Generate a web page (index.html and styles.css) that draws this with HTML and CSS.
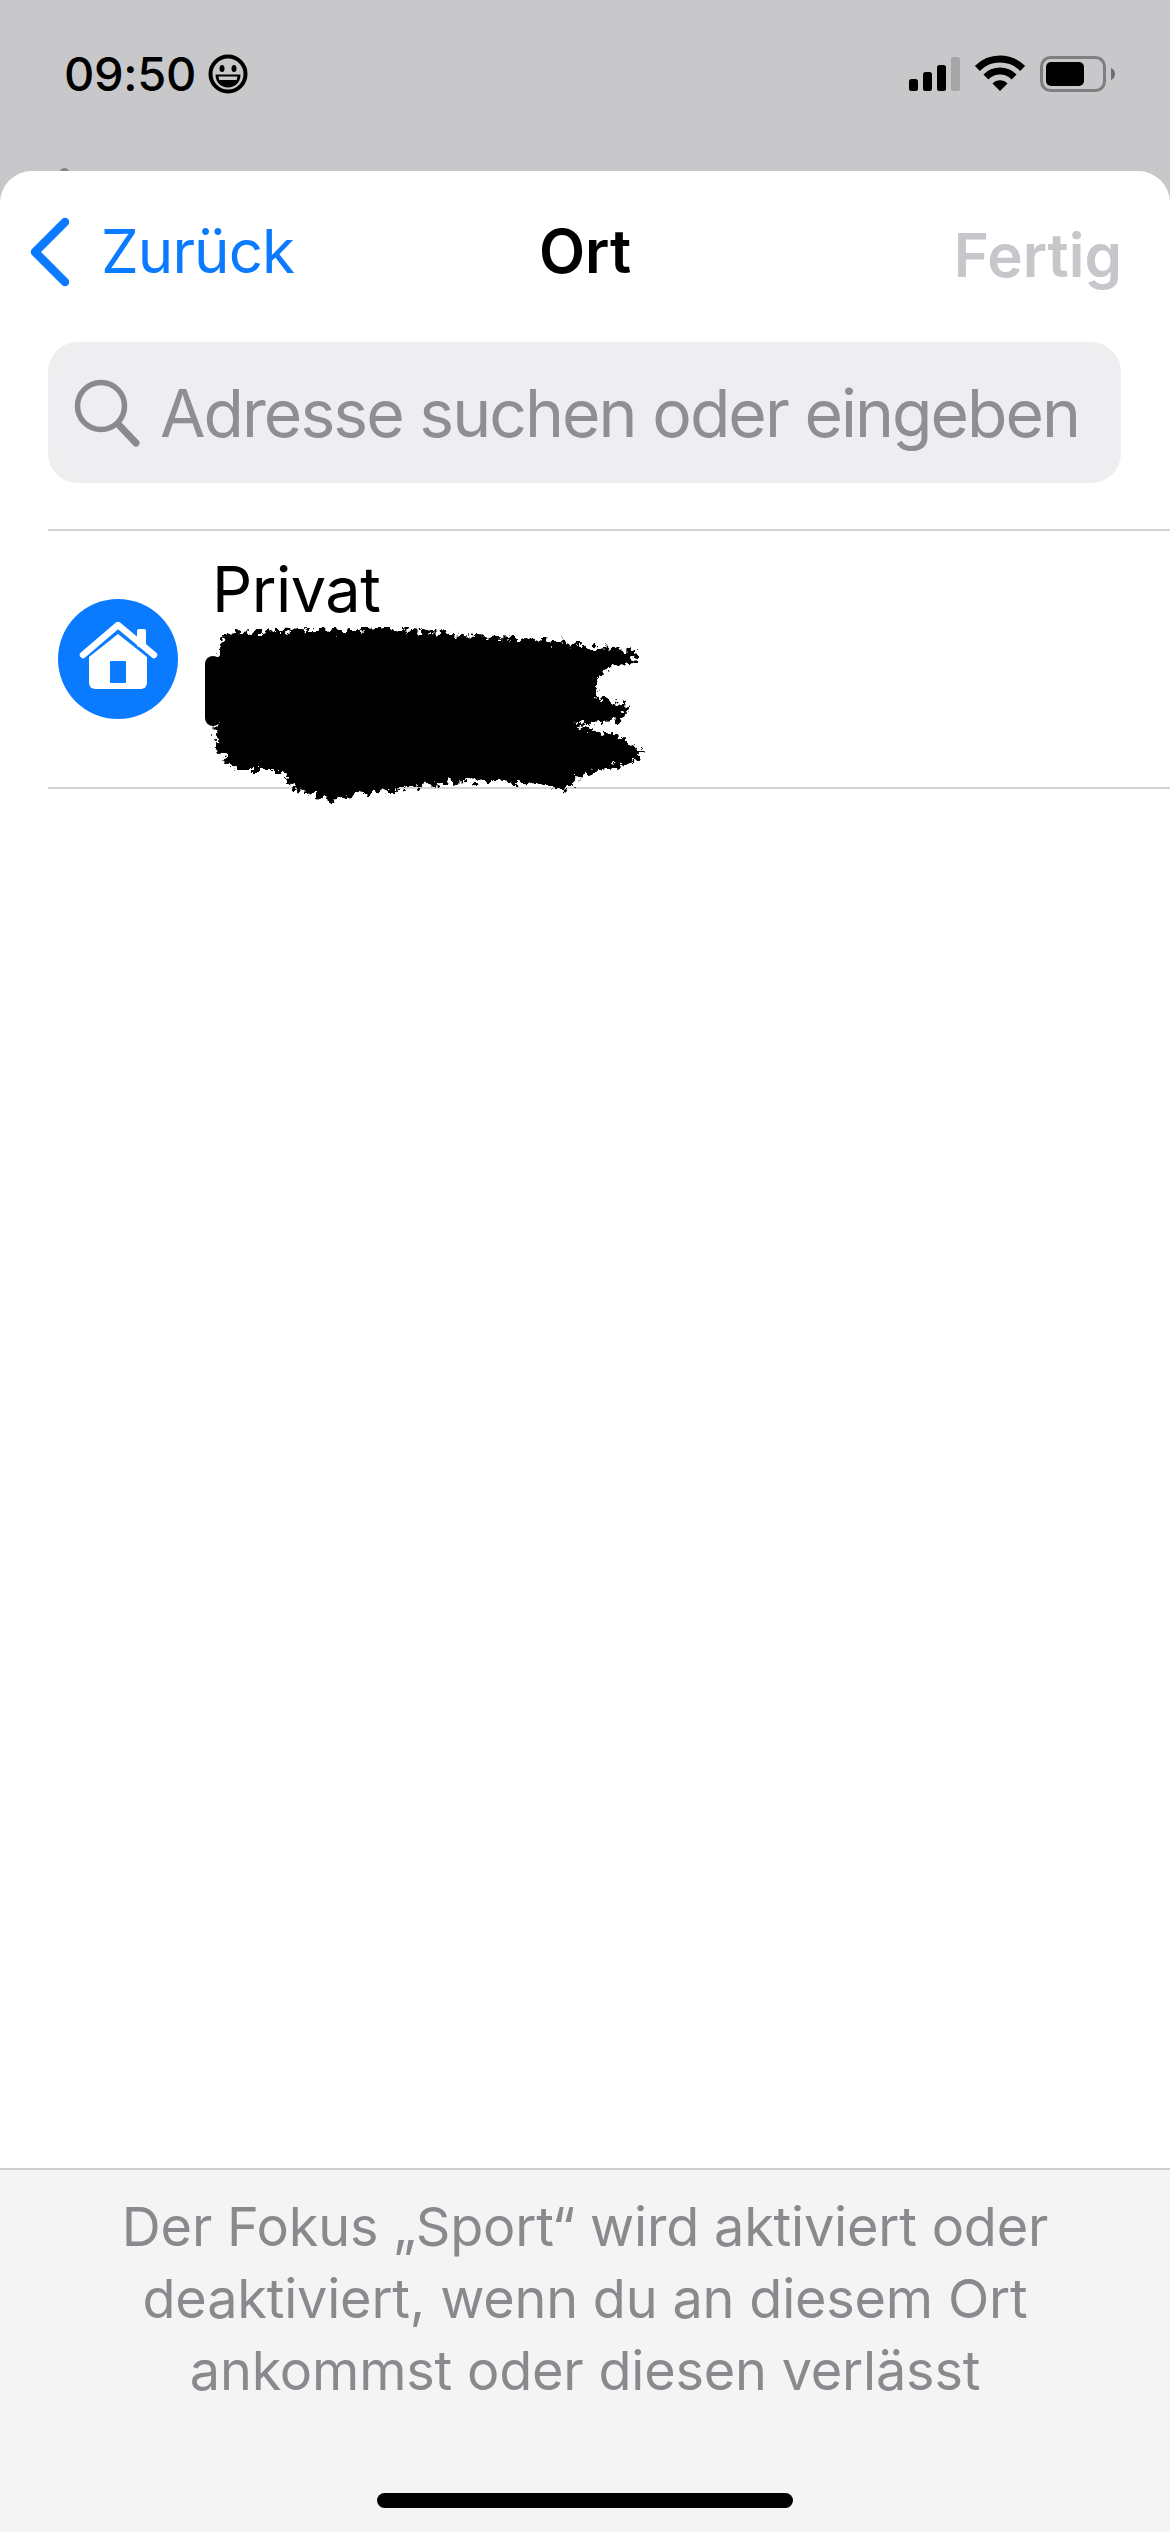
FILE: index.html
```html
<!DOCTYPE html>
<html lang="de">
<head>
<meta charset="utf-8">
<title>Ort</title>
<link rel="stylesheet" href="styles.css">
</head>
<body>
<div class="screen">
  <header class="status">
    <div class="status-left">
      <span class="time">09:50</span>
      <svg class="smiley" viewBox="0 0 40 40"><circle cx="20" cy="20" r="17.5" fill="none" stroke="#000" stroke-width="4"/><ellipse cx="14" cy="14.5" rx="2.5" ry="3.5"/><ellipse cx="26" cy="14.5" rx="2.5" ry="3.5"/><path d="M7.5 20.5h25c0 8-5.5 13-12.5 13S7.500 28.500 7.500 20.500Z"/><path d="M10.500 22.500h19l-.8 3.500H11.300Z" fill="#c8c8ca"/></svg>
    </div>
    <div class="status-right">
      <svg class="signal" viewBox="0 0 51 34"><rect x="0" y="22" width="9" height="12" rx="2.500"/><rect x="14" y="15" width="9" height="19" rx="2.500"/><rect x="28" y="8" width="9" height="26" rx="2.500"/><rect x="42" y="0" width="9" height="34" rx="2.500" fill="#a5a5a7"/></svg>
      <svg class="wifi" viewBox="0 0 50 36"><path d="M2.400 13.400A32 32 0 0 1 47.600 13.400" fill="none" stroke="#000" stroke-width="7"/><path d="M10.900 21.900A20 20 0 0 1 39.100 21.900" fill="none" stroke="#000" stroke-width="7"/><path d="M25 36L17.500 28.500A10.500 10.500 0 0 1 32.500 28.500Z"/></svg>
      <svg class="battery" viewBox="0 0 75 36"><rect x="1.500" y="1.500" width="63" height="33" rx="9" fill="none" stroke="#7f7f82" stroke-width="3"/><rect x="6" y="6" width="38" height="24" rx="5"/><path d="M71 12c2.500 1 4 3.200 4 6s-1.500 5-4 6Z" fill="#6f6f72"/></svg>
    </div>
    <span class="peek"></span>
  </header>

  <main class="sheet">
    <nav class="nav">
      <div class="back">
        <svg class="chevron" viewBox="0 0 42 72"><path d="M36 6L6 36L36 66" fill="none" stroke="#0a7aff" stroke-width="8.500" stroke-linecap="round" stroke-linejoin="round"/></svg>
        <span>Zurück</span>
      </div>
      <h1 class="title">Ort</h1>
      <div class="done">Fertig</div>
    </nav>

    <div class="search">
      <svg class="glass" viewBox="0 0 66 68"><circle cx="27" cy="27" r="23.500" fill="none" stroke="#8a8a8e" stroke-width="5.500"/><path d="M44 45L62 64" fill="none" stroke="#8a8a8e" stroke-width="7" stroke-linecap="round"/></svg>
      <span class="placeholder">Adresse suchen oder eingeben</span>
    </div>

    <section class="list">
      <div class="row">
        <svg class="home" viewBox="0 0 120 120"><circle cx="60" cy="60" r="60" fill="#0a7aff"/><path d="M31 58L60 35L89 58V84a6 6 0 0 1-6 6H37a6 6 0 0 1-6-6Z" fill="#fff"/><rect x="52" y="62" width="16" height="22" rx="1" fill="#0a7aff"/><rect x="79" y="30" width="9" height="18" rx="2" fill="#fff"/><path d="M25 56L60 26L96 56" fill="none" stroke="#fff" stroke-width="6.500" stroke-linecap="round" stroke-linejoin="round"/></svg>
        <div class="row-text">
          <div class="row-name">Privat</div>
        </div>
        <svg class="scribble" viewBox="0 0 450 190">
          <defs><filter id="rough" x="-5%" y="-10%" width="110%" height="120%" color-interpolation-filters="sRGB"><feTurbulence type="fractalNoise" baseFrequency="0.16" numOctaves="4" seed="7"/><feDisplacementMap in="SourceGraphic" scale="17" xChannelSelector="R" yChannelSelector="G"/><feGaussianBlur stdDeviation="0.6"/></filter></defs>
          <path filter="url(#rough)" d="M20 7L73 4L189 1L256 8L332 12L396 21L432 24L430 35L396 45L390 69L427 79L416 94L369 97L416 110L438 124L432 134L378 148L363 162L287 153L224 158L153 167L126 174L88 160L77 143L31 143L12 122L14 25Z"/>
          <rect x="1" y="29" width="16" height="70" rx="8"/>
        </svg>
      </div>
    </section>

    <footer class="footer">
      <p class="hint">Der Fokus „Sport“ wird aktiviert oder deaktiviert, wenn du an diesem Ort ankommst oder diesen verlässt</p>
      <div class="home-bar"></div>
    </footer>
  </main>
</div>
</body>
</html>
```

FILE: styles.css
```css
* { box-sizing: border-box; }
html, body { margin: 0; padding: 0; }
body { background: #c8c8ca; font-family: Inter, "Liberation Sans", sans-serif; color: #000; }
.screen { width: 1170px; height: 2532px; display: flex; flex-direction: column; overflow: hidden; }

.status { position: relative; height: 171px; flex: none; display: flex; justify-content: space-between; align-items: flex-start; padding: 55px 55px 0 64px; }
.status-left { display: flex; align-items: center; gap: 12px; height: 38px; }
.time { font-size: 47px; font-weight: 500; line-height: 38px; letter-spacing: -0.3px; }
.smiley { width: 40px; height: 40px; display: block; }
.status-right { display: flex; align-items: flex-start; }
.signal { width: 51px; height: 34px; margin-top: 2px; margin-right: 15px; display: block; }
.wifi { width: 50px; height: 36px; margin-right: 15px; display: block; }
.battery { width: 75px; height: 36px; margin-top: 1px; display: block; }
.peek { position: absolute; left: 60px; top: 168px; width: 9px; height: 9px; border-radius: 50%; background: #858587; }

.sheet { position: relative; flex: 1; display: flex; flex-direction: column; background: #fff; border-radius: 32px 32px 0 0; min-height: 0; }

.nav { display: grid; grid-template-columns: 1fr auto 1fr; align-items: start; height: 171px; padding: 45px 48px 0; }
.back { display: flex; align-items: flex-start; gap: 30px; margin-left: -19px; color: #0a7aff; font-size: 60px; line-height: 70px; letter-spacing: -0.9px; }
.chevron { width: 42px; height: 72px; display: block; flex: none; }
.title { margin: 0; font-size: 60px; line-height: 70px; font-weight: 600; }
.done { justify-self: end; margin-top: 4px; color: #c7c7cb; font-size: 60px; line-height: 70px; font-weight: 600; }

.search { margin: 0 49px 0 48px; height: 141px; flex: none; display: flex; align-items: center; gap: 20px; padding-left: 26px; background: #eeeef0; border-radius: 30px; }
.glass { width: 66px; height: 68px; flex: none; display: block; }
.placeholder { color: #8e8e93; font-size: 66px; line-height: 80px; letter-spacing: -1.950px; white-space: nowrap; }

.list { margin: 46px 0 0 48px; flex: 1; min-height: 0; }
.row { position: relative; height: 260px; display: flex; align-items: center; gap: 34px; padding-left: 10px; border-top: 2px solid #d4d4d6; border-bottom: 2px solid #d4d4d6; }
.home { width: 120px; height: 120px; flex: none; display: block; }
.row-text { align-self: flex-start; padding-top: 21px; }
.row-name { font-size: 63px; line-height: 74px; letter-spacing: -0.5px; }
.scribble { position: absolute; left: 156px; top: 96px; width: 450px; height: 190px; display: block; }

.footer { position: relative; flex: none; height: 364px; background: #f4f4f5; border-top: 2px solid #cfcfd2; padding: 21px 100px 0; }
.hint { margin: 0; text-align: center; color: #8a8a8e; font-size: 54px; line-height: 72px; letter-spacing: -0.200px; }
.home-bar { position: absolute; left: 377px; top: 323px; width: 416px; height: 15px; border-radius: 8px; background: #000; }
```
